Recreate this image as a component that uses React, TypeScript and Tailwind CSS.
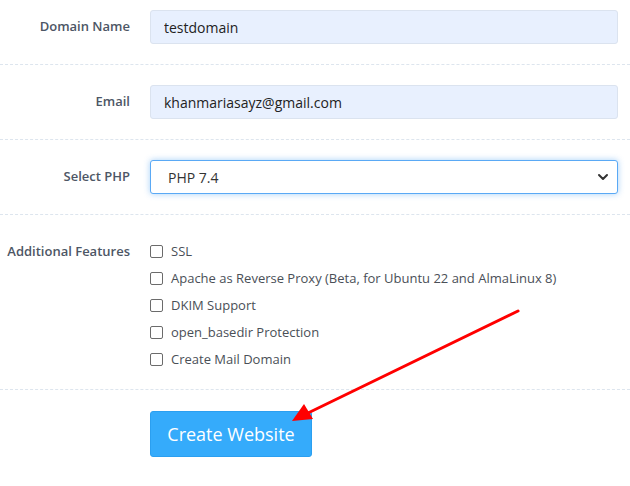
import { ChevronDown } from "lucide-react";

const features = [
  "SSL",
  "Apache as Reverse Proxy (Beta, for Ubuntu 22 and AlmaLinux 8)",
  "DKIM Support",
  "open_basedir Protection",
  "Create Mail Domain",
];

const Label = ({ children }: { children: React.ReactNode }) => (
  <div className="w-[130px] shrink-0 text-right text-[13px] font-semibold text-[#4d5665]">{children}</div>
);

export default function App() {
  return (
    <div className="relative w-[630px] h-[486px] bg-white overflow-hidden" style={{ fontFamily: '"Open Sans", sans-serif' }}>
      <div className="flex items-center gap-[20px] pt-[10px] pb-[20px] border-b border-dashed border-[#dde5ee]">
        <Label>Domain Name</Label>
        <input
          readOnly
          value="testdomain"
          className="w-[468px] h-[34px] px-[13px] rounded-[3px] border border-[#dbe3ef] bg-[#e8f0fe] text-[14px] text-[#222] outline-none"
        />
      </div>

      <div className="flex items-center gap-[20px] py-[20px] border-b border-dashed border-[#dde5ee]">
        <Label>Email</Label>
        <input
          readOnly
          value="khanmariasayz@gmail.com"
          className="w-[468px] h-[34px] px-[13px] rounded-[3px] border border-[#dbe3ef] bg-[#e8f0fe] text-[14px] text-[#222] outline-none"
        />
      </div>

      <div className="flex items-center gap-[20px] py-[20px] border-b border-dashed border-[#dde5ee]">
        <Label>Select PHP</Label>
        <div className="relative w-[468px] h-[34px] rounded-[3px] border border-[#5aa9f5] bg-white shadow-[0_0_6px_rgba(60,150,240,0.45)] flex items-center px-[17px]">
          <span className="text-[14px] text-[#333]">PHP 7.4</span>
          <ChevronDown className="absolute right-[6px] top-[8px] w-[16px] h-[16px] text-[#333]" strokeWidth={3} />
        </div>
      </div>

      <div className="flex items-start gap-[20px] pt-[23px] pb-[16px] border-b border-dashed border-[#dde5ee]">
        <div className="h-[27px] flex items-center justify-end">
          <Label>Additional Features</Label>
        </div>
        <div className="flex flex-col">
          {features.map((f) => (
            <label key={f} className="h-[27px] flex items-center gap-[8px] text-[13px] text-[#4a4f57]">
              <span className="w-[13px] h-[13px] rounded-[2px] border border-[#6b6b6b] bg-white" />
              {f}
            </label>
          ))}
        </div>
      </div>

      <div className="flex pl-[150px] pt-[21px]">
        <button className="w-[162px] h-[46px] rounded-[3px] border border-[#2b9ff0] bg-[#35abfb] text-white text-[18px]">
          Create Website
        </button>
      </div>

      <svg className="absolute inset-0 pointer-events-none" width="630" height="486">
        <line x1="518" y1="311" x2="308" y2="413" stroke="#ff0000" strokeWidth="3" strokeLinecap="round" />
        <polygon points="292,421 304,404 313,419" fill="#ff0000" />
      </svg>
    </div>
  );
}
